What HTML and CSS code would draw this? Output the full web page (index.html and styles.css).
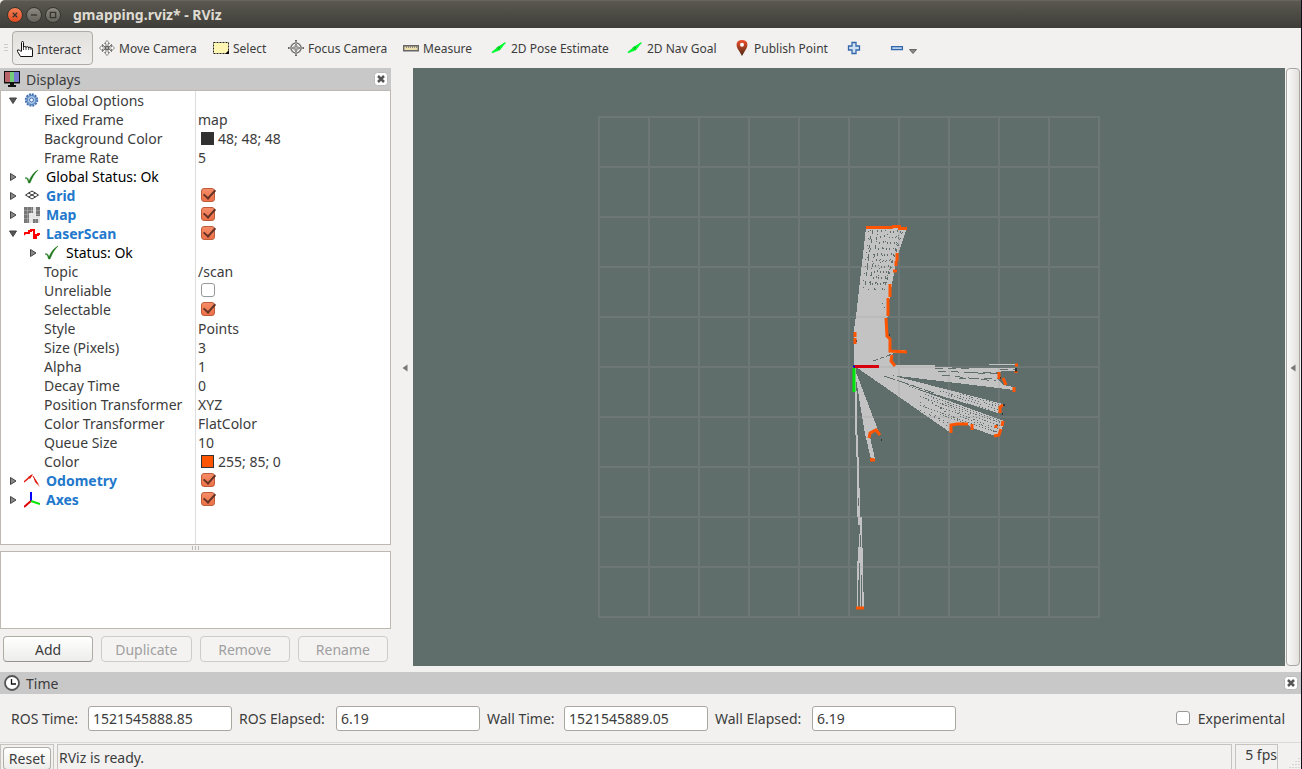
FILE: index.html
```html
<!DOCTYPE html>
<html lang="en">
<head>
<meta charset="utf-8">
<title>gmapping.rviz* - RViz</title>
<link rel="stylesheet" href="styles.css">
</head>
<body>
<svg class="defs" width="0" height="0" aria-hidden="true">
  <defs>
    <linearGradient id="pin" x1="0" y1="0" x2="0" y2="1"><stop offset="0" stop-color="#f0502d"/><stop offset="1" stop-color="#4a2a12"/></linearGradient>
    <symbol id="closed" viewBox="0 0 8 8"><path d="M1.5 .5 7 4 1.5 7.5z" fill="#888" stroke="#444"/></symbol>
    <symbol id="open" viewBox="0 0 8 8"><path d="M.5 1h7L4 6.500z" fill="#555" stroke="#444"/></symbol>
    <symbol id="ok" viewBox="0 0 16 16"><path d="M1 9c2-1 3 0 4 3C7 7 10 3 14 1 10 5 8 9 6 14H4.500C4 11 3 9.500 1 9z" fill="#1c781c" stroke="#1c781c" stroke-width=".5"/></symbol>
    <symbol id="arrow" viewBox="0 0 18 16"><path d="M1 13 16 2" stroke="#00ef2a" stroke-width="1.500"/><path d="M1 14 7 7l3 3.500z" fill="#00ff2c"/><path d="M7 7l3 3.500L17 1.500z" fill="#00ff2c"/><path d="M7 7.500 9.500 10M8.500 6.500 10 8" stroke="#087a18"/></symbol>
    <symbol id="close" viewBox="0 0 14 14"><rect x=".5" y=".5" width="13" height="13" rx="3" fill="#fff" stroke="#bbb"/><path d="M4 4l6 6M10 4l-6 6" stroke="#555" stroke-width="2.500"/></symbol>
  </defs>
</svg>
<div class="window">
  <header class="titlebar">
    <button class="wm wm-close" aria-label="Close"><svg viewBox="0 0 16 16"><path d="M5.500 5.500l5 5m0-5l-5 5"/></svg></button>
    <button class="wm" aria-label="Minimize"><svg viewBox="0 0 16 16"><path d="M4.500 8h7"/></svg></button>
    <button class="wm" aria-label="Maximize"><svg viewBox="0 0 16 16"><path d="M5 5h6v6H5z"/></svg></button>
    <h1>gmapping.rviz* - RViz</h1>
  </header>

  <nav class="toolbar">
    <span class="grip"></span>
    <button class="tool active"><svg class="ic" viewBox="0 0 16 16"><path d="M4.500 10V1.500q0-1 1-1t1 1V6.500q0-1 1.300-1T9 6.500q0-.8 1.300-.8T11.700 7q0-.8 1.200-.8T14 7.500q0-.5.800-.5t.7 1.500V15.500H3.500L.5 10.500V9h2l2 2" fill="#fff" stroke="#111"/><path d="M6.500 6.500V9M9 6.500V9M11.700 7V9M14 7.500V9" stroke="#111" stroke-width=".8"/></svg>Interact</button>
    <button class="tool w114"><svg class="ic" viewBox="0 0 16 16"><path d="M8 .5 5.500 3.500h1.500V7H3.500V5L.5 8l3 3V9H7v3.500H5.500L8 15.500l2.500-3H9V9h3.500v2l3-3-3-3v2H9V3.500h1.500zM3 4l4 4M13 4L9 8M3 12l4-4M13 12L9 8" fill="#fff" stroke="#666" stroke-width=".8"/><circle cx="8" cy="8" r="1.800" fill="#aaa" stroke="#555"/></svg>Move Camera</button>
    <button class="tool w75"><svg class="ic" viewBox="0 0 16 16"><path d="M.5 2.500h15v11H.5z" fill="#fff6b4" stroke="#222" stroke-dasharray="2 1"/><path d="M12 14h4v-4z"/></svg>Select</button>
    <button class="tool w115"><svg class="ic" viewBox="0 0 16 16"><circle cx="8" cy="8" r="5" fill="#fff" stroke="#777" stroke-width="1.600"/><circle cx="8" cy="8" r="2.500" fill="none" stroke="#888"/><path d="M8 0v16M0 8h16" stroke="#666" stroke-width="2"/><path d="M8 1v14M1 8h14" stroke="#ddd" stroke-width=".8"/></svg>Focus Camera</button>
    <button class="tool w88"><svg class="ic" viewBox="0 0 16 16"><path d="M.7 5.700h14.600v5H.7z" fill="#ecdfac" stroke="#666" stroke-width="1.400"/><path d="M3.500 6v2M5.500 6v2M7.500 6v2M9.500 6v2M11.500 6v2M13.500 6v2" stroke="#777" stroke-width=".8"/></svg>Measure</button>
    <button class="tool w136"><svg class="ic" viewBox="0 0 18 16"><use href="#arrow"/></svg>2D Pose Estimate</button>
    <button class="tool w107"><svg class="ic" viewBox="0 0 18 16"><use href="#arrow"/></svg>2D Nav Goal</button>
    <button class="tool w111"><svg class="ic" viewBox="0 0 16 16"><path d="M8 0C1.500 0 1.500 6 4.500 10L8 16l3.500-6C14.500 6 14.500 0 8 0z" fill="url(#pin)"/><circle cx="8" cy="4.800" r="2" fill="#fff"/></svg>Publish Point</button>
    <button class="tool w44" aria-label="Add tool"><svg class="ic" viewBox="0 0 16 16"><path d="M7 2.500h4v3.500h3.500v4H11v3.500H7V10H3.500V6H7z" fill="#cfe0f3" stroke="#3568ab" stroke-width="1.300"/></svg></button>
    <button class="tool" aria-label="Remove tool"><svg class="ic" viewBox="0 0 16 16"><path d="M2.600 6.600h10.800v3H2.600z" fill="#b5d0ee" stroke="#3568ab" stroke-width="1.300"/></svg><svg class="drop" viewBox="0 0 8 8"><path d="M.5 3.500h7L4 7.500z" fill="#888" stroke="#666"/></svg></button>
  </nav>

  <main class="main">
    <section class="displays">
      <div class="dock-title">
        <svg class="ic" viewBox="0 0 16 16"><path d="M0 0h16v12.500H0zM6 12h4v2h2v2H4v-2h2z" fill="#111"/><path d="M1 1h5v10H1z" fill="#b9636b"/><path d="M6 1h4v10H6z" fill="#75cc78"/><path d="M10 1h5v10h-5z" fill="#7478cf"/></svg>
        <h2>Displays</h2>
        <button class="x" aria-label="Close Displays"><svg viewBox="0 0 14 14"><use href="#close"/></svg></button>
      </div>
      <div class="tree">
        <table>
          <colgroup><col class="c-name"><col></colgroup>
          <tbody>
          <tr><td><span class="n"><svg class="tw"><use href="#open"/></svg><svg class="ic" viewBox="0 0 16 16"><circle cx="7.500" cy="7" r="5.800" fill="#a9c7ea" stroke="#4673b0" stroke-width="1.800" stroke-dasharray="2 1"/><circle cx="7.500" cy="7" r="4.500" fill="#a9c7ea" stroke="#4673b0"/><circle cx="7.500" cy="7" r="2" fill="#eef5ff" stroke="#4673b0"/></svg>Global Options</span></td><td></td></tr>
          <tr><td class="prop">Fixed Frame</td><td>map</td></tr>
          <tr><td class="prop">Background Color</td><td><span class="v"><i class="swatch dark"></i>48; 48; 48</span></td></tr>
          <tr><td class="prop">Frame Rate</td><td>5</td></tr>
          <tr class="st"><td><span class="n"><svg class="tw"><use href="#closed"/></svg><svg class="ic"><use href="#ok"/></svg>Global Status: Ok</span></td><td></td></tr>
          <tr class="disp"><td><span class="n"><svg class="tw"><use href="#closed"/></svg><svg class="ic" viewBox="0 0 16 16"><path d="M1.500 7 8 3l6.500 4L8 11zM4.500 5l7 4M11.500 5l-7 4" fill="none" stroke="#333"/></svg><label for="d1">Grid</label></span></td><td><input type="checkbox" id="d1" checked></td></tr>
          <tr class="disp"><td><span class="n"><svg class="tw"><use href="#closed"/></svg><svg class="ic" viewBox="0 0 16 16"><path d="M0 0h16v16H0z" fill="#e4e4e4"/><path d="M0 0h9v6H5v10H0zM12 0h4v9h-4zM9 12h5v4H9z" fill="#777"/><path d="M0 3.500h16M0 7.500h16M0 11.500h16M3.500 0v16M7.500 0v16M11.500 0v16" stroke="#fff" stroke-opacity=".4" stroke-width=".6"/></svg><label for="d2">Map</label></span></td><td><input type="checkbox" id="d2" checked></td></tr>
          <tr class="disp"><td><span class="n"><svg class="tw"><use href="#open"/></svg><svg class="ic" viewBox="0 0 16 16"><path d="M0 9 1 7h4V5h2V4h3v8h2V9h2V8h2" fill="none" stroke="red" stroke-width="2"/></svg><label for="d3">LaserScan</label></span></td><td><input type="checkbox" id="d3" checked></td></tr>
          <tr class="st"><td><span class="n sub"><svg class="tw"><use href="#closed"/></svg><svg class="ic"><use href="#ok"/></svg>Status: Ok</span></td><td></td></tr>
          <tr><td class="prop">Topic</td><td>/scan</td></tr>
          <tr><td class="prop"><label for="p1">Unreliable</label></td><td><input type="checkbox" id="p1"></td></tr>
          <tr><td class="prop"><label for="p2">Selectable</label></td><td><input type="checkbox" id="p2" checked></td></tr>
          <tr><td class="prop">Style</td><td>Points</td></tr>
          <tr><td class="prop">Size (Pixels)</td><td>3</td></tr>
          <tr><td class="prop">Alpha</td><td>1</td></tr>
          <tr><td class="prop">Decay Time</td><td>0</td></tr>
          <tr><td class="prop">Position Transformer</td><td>XYZ</td></tr>
          <tr><td class="prop">Color Transformer</td><td>FlatColor</td></tr>
          <tr><td class="prop">Queue Size</td><td>10</td></tr>
          <tr><td class="prop">Color</td><td><span class="v"><i class="swatch orange"></i>255; 85; 0</span></td></tr>
          <tr class="disp"><td><span class="n"><svg class="tw"><use href="#closed"/></svg><svg class="ic" viewBox="0 0 16 16"><path d="M0 9 8 2" stroke="#e01b10" stroke-width="1.500"/><path d="M4 4l5-3-3 5zM9 3l7 11-5-5z" fill="#e01b10"/><path d="M9 3l5 8" stroke="#e01b10"/></svg><label for="d4">Odometry</label></span></td><td><input type="checkbox" id="d4" checked></td></tr>
          <tr class="disp"><td><span class="n"><svg class="tw"><use href="#closed"/></svg><svg class="ic" viewBox="0 0 16 16"><path d="M7 9v-9" stroke="#00f" stroke-width="2"/><path d="M7 9l-7 6" stroke="#e00000" stroke-width="2"/><path d="M7 9l9 3" stroke="#00e600" stroke-width="2"/></svg><label for="d5">Axes</label></span></td><td><input type="checkbox" id="d5" checked></td></tr>
          </tbody>
        </table>
        <span class="tree-rest"></span>
      </div>
      <div class="hsplit"><i></i><i></i><i></i></div>
      <div class="help"></div>
      <div class="actions">
        <button class="btn">Add</button>
        <button class="btn" disabled>Duplicate</button>
        <button class="btn" disabled>Remove</button>
        <button class="btn" disabled>Rename</button>
      </div>
    </section>

    <div class="fold"><svg viewBox="0 0 6 8"><path d="M5.500.5v7L.5 4z" fill="#777"/></svg></div>

    <svg class="scene" viewBox="413 68 872 598" role="img" aria-label="Map view">
      <g fill="#c3c3c3" shape-rendering="crispEdges">
        <path d="M866 228h41l-9 26-6 30-3 18-2 20 2 18 2 10h16l-15 4v12h-38v-36l2-14z"/>
        <path d="M854 366h81v1l33 1h47v3h-14l-3 9 5 5 11 2v3l-24-3-117-14z"/>
        <path d="M856 366l147 38-5 9-130-39z"/>
        <path d="M856 367l148 54-3 12-6 3-22-8-5-3h-16l-1 8z"/>
        <path d="M854 367l24 63-5 1-3 6 5 22h-4l-6-25z"/>
        <path d="M854 368h2l2 89h1l1 60h2l1 60 1 30h-7l1-90h-1v-60h-1z"/>
      </g>
      <path d="M878 365.500h57M989 364.500h27" stroke="#c3c3c3"/>
      <g stroke="#5f6e6b" fill="none" shape-rendering="crispEdges">
        <g stroke-dasharray="4 5"><path d="M865 285l6-55M867 270l6-40M870 285l8-55"/></g>
        <g stroke-dasharray="2 4"><path d="M872 285l10-55M874 290l12-60M877 285l14-55M880 285l14-55M882 290l16-60M885 285l16-55M887 280l16-50"/></g>
        <path d="M863 288l6-58M868 290l10-60M875 290l13-60M884 290l16-60" stroke-dasharray="1 6"/>
        <path d="M882 303h1M884 307h1M873 361l22-8" stroke-dasharray="5 2"/>
        <path d="M935 368l34 1M938 371l60 3M958 378l40 1M942 375l54 6M970 373l30-1M1000 369h15" stroke-dasharray="8 5"/>
        <path d="M884 376l50 17" stroke-dasharray="12 2"/>
        <g stroke-dasharray="1 2"><path d="M940 391l60 16M948 395l52 15M960 394l42 11M950 399l45 12"/><path d="M920 396l80 30M920 405l75 27M925 394l78 28M935 405l64 24M940 414l25 9M945 403l55 20M960 416l38 16"/></g>
        <g stroke-dasharray="1 4"><path d="M920 402l30 26M928 400l30 20M920 410l30 14M930 415l20 11M933 398l68 37M970 413l31 9"/></g>
        <path d="M858.500 498v8M859.500 525v9M858.500 525v22M860.500 535v12M859.500 563v44M861.500 575v32M858.500 580v27"/>
      </g>
      <path d="M599 116v502M649 116v502M699 116v502M749 116v502M799 116v502M849 116v502M899 116v502M949 116v502M999 116v502M1049 116v502M1099 116v502M598 117h502M598 167h502M598 217h502M598 267h502M598 317h502M598 367h502M598 417h502M598 467h502M598 517h502M598 567h502M598 617h502" stroke="#a0a09e" stroke-opacity=".22" stroke-width="2"/>
      <g fill="none" stroke="#ff5500" stroke-width="3">
        <path d="M866 227.500h27M892 226.500h9M898 228.500h9M897 253v8M896 261v5M893 271h4M890 284v13M888 298v18M886 318l1 18 3 3v12l17 1M855 332v5M855 338v6M892 355l-1 6 4 5"/>
        <path d="M999 372v7M1003 378l3 7M1014 387v5M1015 365h3M1016 371v2M1000 413v-6l3-2M951 433v-8l6-1h11M972 424v6M1003 421l-1 5M996 428v-3M994 436l5-1 2-6M869 438l1-5 6-3 4 5M872 459v-1M870 460h5M856 608h8"/>
      </g>
      <path d="M889 335h1M1016 368v4M1000 378h1M1004 404v2M1002 414h1M997 425h1M881 440h1M856 341h1" stroke="#000"/>
      <path d="M854 366.500h25" stroke="#d9000d" stroke-width="3"/>
      <path d="M854 368v24" stroke="#00e60b" stroke-width="3"/>
      <path d="M853 366.500h2" stroke="#0000c8" stroke-width="2"/>
    </svg>

    <div class="fold right"><svg viewBox="0 0 6 8"><path d="M5.500.5v7L.5 4z" fill="#777"/></svg></div>
  </main>

  <section class="time">
    <div class="dock-title">
      <svg class="ic" viewBox="0 0 16 16"><circle cx="8" cy="8" r="7" fill="#fff" stroke="#555" stroke-width="1.800"/><path d="M7.500 4v5H12" fill="none" stroke="#111" stroke-width="1.300"/></svg>
      <h2>Time</h2>
      <button class="x" aria-label="Close Time"><svg viewBox="0 0 14 14"><use href="#close"/></svg></button>
    </div>
    <form class="fields">
      <label class="l70" for="t1">ROS Time:</label><input type="text" id="t1" value="1521545888.85">
      <label class="l90" for="t2">ROS Elapsed:</label><input type="text" id="t2" value="6.19">
      <label class="l70" for="t3">Wall Time:</label><input type="text" id="t3" value="1521545889.05">
      <label class="l90" for="t4">Wall Elapsed:</label><input type="text" id="t4" value="6.19">
      <span class="exp"><input type="checkbox" id="ex"><label for="ex">Experimental</label></span>
    </form>
  </section>

  <footer class="status">
    <div class="cell"><button class="btn reset">Reset</button></div>
    <div class="cell msg">RViz is ready.</div>
    <div class="cell fps">5 fps</div>
    <svg class="size" viewBox="0 0 12 12"><path d="M10 1v11M7 4v8M4 7v5M1 10v2" stroke="#bbb" stroke-dasharray="1 2"/></svg>
  </footer>
</div>
</body>
</html>
```
FILE: styles.css
```css
* { box-sizing: border-box; }
body {
  margin: 0;
  background: #160d1a;
  color: #3c3c3c;
  font: 14px/19px "Noto Sans", "Open Sans", sans-serif;
}
.defs { position: absolute; }
h1, h2 { margin: 0; font-size: inherit; font-weight: normal; }
button, input { font: inherit; color: inherit; margin: 0; }
.window {
  display: flex;
  flex-direction: column;
  height: 100vh;
  margin-right: 1px;
  background: #f2f1f0;
}
.ic { width: 16px; height: 16px; flex: none; }

.titlebar {
  display: flex;
  align-items: center;
  gap: 3px;
  height: 28px;
  padding-left: 7px;
  border-top: 1px solid #67645c;
  border-radius: 5px 0 0 0;
  background: linear-gradient(#5a5850, #3e3d38);
}
.titlebar h1 {
  margin-left: 9px;
  color: #dfdbd2;
  font-size: 14px;
  font-weight: bold;
}
.wm {
  width: 16px;
  height: 16px;
  padding: 0;
  border: 1px solid #35342f;
  border-radius: 50%;
  background: linear-gradient(#8b8981, #65635c);
}
.wm svg { display: block; width: 14px; height: 14px; fill: none; stroke: #35342f; stroke-width: 1.5; }
.wm-close { background: linear-gradient(#f68055, #df4b20); }

.toolbar {
  display: flex;
  align-items: center;
  height: 40px;
  padding: 0 4px;
  font-size: 12px;
}
.grip {
  width: 4px;
  height: 8px;
  margin-right: 4px;
  background: repeating-linear-gradient(#ccc 0 1px, transparent 1px 3px);
}
.tool {
  display: flex;
  align-items: center;
  gap: 4px;
  padding: 0;
  border: 0;
  background: none;
  white-space: nowrap;
}
.tool.active {
  width: 81px;
  height: 34px;
  margin-right: 6px;
  padding: 2px 4px 0;
  border: 1px solid #b0aca5;
  border-radius: 4px;
  background: linear-gradient(#e2e0dd, #efeeec);
}
.w114 { width: 114px; }
.w75 { width: 75px; }
.w115 { width: 115px; }
.w88 { width: 88px; }
.w136 { width: 136px; }
.w107 { width: 107px; }
.w111 { width: 111px; }
.w44 { width: 44px; }
.drop { width: 8px; height: 8px; margin-top: 4px; }

.main { display: flex; flex: 1; min-height: 0; }
.displays { display: flex; flex-direction: column; flex: 0 0 391px; padding-bottom: 10px; }
.dock-title {
  display: flex;
  align-items: center;
  gap: 6px;
  flex: none;
  height: 22px;
  padding: 0 3px 0 4px;
  background: #c8c8c8;
}
.x { width: 14px; height: 14px; margin-left: auto; padding: 0; border: 0; background: none; }
.x svg { display: block; }
.tree {
  display: flex;
  flex-direction: column;
  flex: 1;
  min-height: 0;
  border: 1px solid #bfb8b1;
  background: #fff;
  overflow: hidden;
}
table { width: 100%; border-collapse: separate; border-spacing: 0; table-layout: fixed; }
.c-name { width: 195px; }
td { height: 19px; padding: 0 0 0 2px; white-space: nowrap; }
td:first-child { padding-left: 8px; border-right: 1px solid #ddd; }
td.prop { padding-left: 43px; }
.n { display: flex; align-items: center; gap: 7px; height: 19px; }
.n.sub { padding-left: 20px; }
.n .ic { margin-right: -1px; }
.tw { width: 8px; height: 8px; }
.tree-rest { flex: 1; width: 195px; border-right: 1px solid #ddd; }
.st { color: #000; }
.disp label { color: #2278cc; font-weight: bold; }
.v { display: flex; align-items: center; gap: 4px; padding-left: 3px; }
.swatch { width: 13px; height: 13px; border: 1px solid #333; }
.dark { background: #303030; }
.orange { background: #f50; }
input[type="checkbox"] {
  appearance: none;
  display: block;
  width: 14px;
  height: 14px;
  border: 1px solid #999;
  border-radius: 3px;
  background: #fff;
}
td input[type="checkbox"] { margin: 0 0 1px 3px; }
input[type="checkbox"]:checked { position: relative; border-color: #bd5c39; background: linear-gradient(#f58c67, #ed7148); }
input[type="checkbox"]:checked::after {
  content: "";
  position: absolute;
  left: 4px;
  top: -2px;
  width: 5px;
  height: 10px;
  border: solid #643326;
  border-width: 0 2px 2px 0;
  transform: rotate(42deg);
}
.hsplit { display: flex; flex: none; justify-content: center; align-items: center; gap: 2px; height: 6px; }
.hsplit i { width: 1px; height: 4px; background: #bbb; }
.help { flex: none; height: 78px; border: 1px solid #bfb8b1; background: #fff; }
.actions { display: flex; gap: 8px; padding: 7px 3px 0; }
.btn {
  flex: 1;
  height: 26px;
  padding: 0;
  border: 1px solid #b0aca6;
  border-bottom-color: #96928c;
  border-radius: 4px;
  background: linear-gradient(#fff, #ededeb);
}
.btn:disabled { border-color: #cfccc8; background: #f4f3f2; color: #a0a0a0; }
.fold { display: flex; flex: 0 0 22px; align-items: center; justify-content: center; padding: 0 0 4px 6px; }
.fold svg { width: 6px; height: 8px; }
.fold.right {
  flex-basis: 14px;
  margin: 0 1px 6px;
  padding: 2px 0 0;
  border: 1px solid #aaa6a1;
  border-radius: 4px;
  background: linear-gradient(90deg, #fafafa, #e2e0dd);
}
.scene { flex: 1; min-width: 0; height: calc(100% - 6px); background: #5f6e6b; }

.time { flex: none; }
.fields { display: flex; align-items: center; gap: 7px; height: 48px; padding: 0 16px 0 11px; }
.fields label { white-space: nowrap; }
.l70 { width: 70px; }
.l90 { width: 90px; }
.fields input[type="text"] {
  width: 144px;
  height: 25px;
  padding: 0 4px;
  border: 1px solid #aaa6a1;
  border-radius: 3px;
  background: #fff;
}
.exp { display: flex; align-items: center; gap: 8px; margin-left: auto; }

.status { display: flex; gap: 3px; flex: none; height: 27px; padding-top: 1px; border-top: 1px solid #dcdad7; }
.cell { border: solid #c6c3bf; border-width: 1px 1px 0; padding: 2px; white-space: nowrap; }
.cell:first-child { display: flex; width: 54px; }
.reset { height: 23px; }
.msg { flex: 1; padding-top: 3px; padding-left: 1px; }
.fps { width: 43px; padding: 0; text-align: right; }
.size { width: 12px; height: 12px; margin: auto 0 0 8px; }
```
